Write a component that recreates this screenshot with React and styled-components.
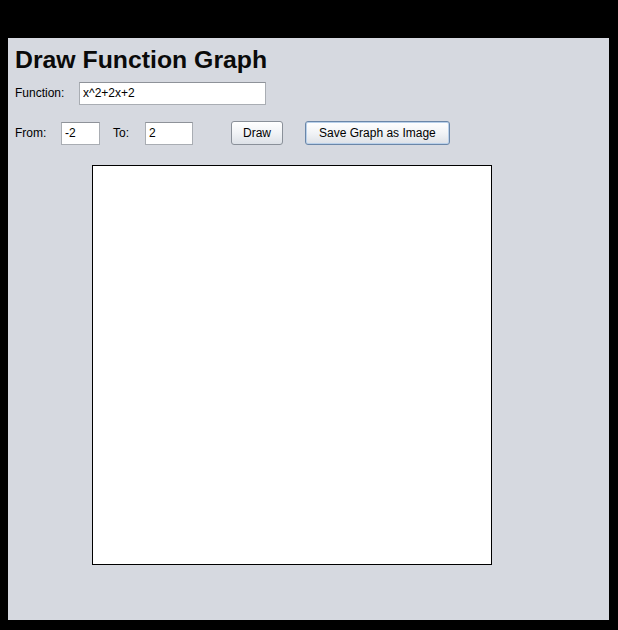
import React, { useState } from 'react'
import styled, { createGlobalStyle } from 'styled-components'

const Global = createGlobalStyle`
html, body {
  margin: 0;
  padding: 0;
  background: #000;
  width: 618px;
  height: 630px;
  overflow: hidden;
}
`

const Screen = styled.div`
width: 618px;
height: 630px;
background: #000;
padding: 38px 9px 10px 8px;
box-sizing: border-box;
`

const Panel = styled.div`
width: 601px;
height: 582px;
background: #d6d9e0;
display: flex;
flex-direction: column;
padding: 7px 0 0 7px;
box-sizing: border-box;
font-family: "Liberation Sans", Arial, sans-serif;
font-size: 12px;
color: #000;
`

const Title = styled.h1`
margin: 0;
font-family: "Liberation Sans", Arial, sans-serif;
font-weight: bold;
font-size: 24.8px;
line-height: 29px;
color: #0a0a0a;
`

const Row = styled.div`
display: flex;
align-items: center;
height: 24px;
margin-top: ${({ top }) => top}px;
`

const Label = styled.span`
width: ${({ w }) => w}px;
flex-shrink: 0;
`

const Field = styled.input`
width: ${({ w }) => w}px;
height: 23px;
box-sizing: border-box;
border: 1px solid #a9adb3;
border-top-color: #8e9299;
background: #fff;
padding: 0 3px;
font-family: "Liberation Sans", Arial, sans-serif;
font-size: 12px;
color: #000;
margin-right: ${({ gap }) => gap || 0}px;
outline: none;
`

const Button = styled.button`
height: 24px;
box-sizing: border-box;
padding: 0 ${({ pad }) => pad}px;
margin-left: ${({ left }) => left}px;
border: 1px solid ${({ focus }) => (focus ? '#6a86a8' : '#8a9099')};
border-radius: 3px;
background: linear-gradient(#ffffff, #f1f3f6 50%, #dde1e7);
box-shadow: ${({ focus }) => (focus ? 'inset 0 0 0 1px #b9d0ea' : 'none')};
font-family: "Liberation Sans", Arial, sans-serif;
font-size: 12px;
color: #000;
`

const Canvas = styled.div`
width: 400px;
height: 400px;
box-sizing: border-box;
border: 1px solid #000;
background: #fff;
margin: 20px 0 0 77px;
`

const App = () => {
  const [fn, setFn] = useState('x^2+2x+2')
  const [from, setFrom] = useState('-2')
  const [to, setTo] = useState('2')
  return (
    <Screen>
      <Global />
      <Panel>
        <Title>Draw Function Graph</Title>
        <Row top={7}>
          <Label w={64}>Function:</Label>
          <Field w={187} value={fn} onChange={e => setFn(e.target.value)} />
        </Row>
        <Row top={16}>
          <Label w={46}>From:</Label>
          <Field w={39} gap={13} value={from} onChange={e => setFrom(e.target.value)} />
          <Label w={32}>To:</Label>
          <Field w={48} value={to} onChange={e => setTo(e.target.value)} />
          <Button left={38} pad={11}>Draw</Button>
          <Button left={22} pad={13} focus>Save Graph as Image</Button>
        </Row>
        <Canvas />
      </Panel>
    </Screen>
  )
}

export default App
